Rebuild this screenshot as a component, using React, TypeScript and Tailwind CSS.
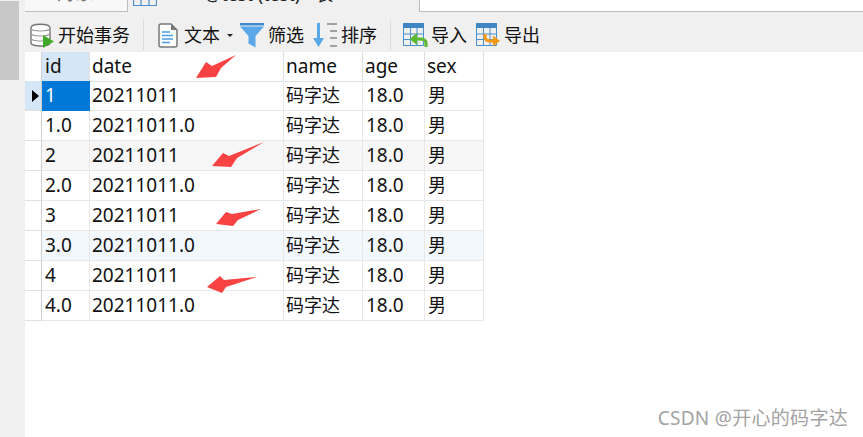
const rows = [
  { id: '1', date: '20211011', bg: 'bg-white' },
  { id: '1.0', date: '20211011.0', bg: 'bg-white' },
  { id: '2', date: '20211011', bg: 'bg-[#f7f7f7]' },
  { id: '2.0', date: '20211011.0', bg: 'bg-white' },
  { id: '3', date: '20211011', bg: 'bg-white' },
  { id: '3.0', date: '20211011.0', bg: 'bg-[#f3f8fd]' },
  { id: '4', date: '20211011', bg: 'bg-white' },
  { id: '4.0', date: '20211011.0', bg: 'bg-white' },
];

const font = "font-['Noto_Sans','Noto_Sans_CJK_SC',sans-serif]";
const cols = 'grid grid-cols-[17px_48px_194px_79px_62px_59px]';
const cell = 'border-r border-b border-[#e8e8e8] pl-[2px] text-[19px] leading-[29px] text-[#111] whitespace-nowrap';
const cjk = 'border-r border-b border-[#e8e8e8] pl-[2px] text-[18px] leading-[29px] text-[#111] whitespace-nowrap';
const wide = 'border-r border-b border-[#e8e8e8] pl-[3px] text-[19px] leading-[29px] text-[#111] whitespace-nowrap';
const wideCjk = 'border-r border-b border-[#e8e8e8] pl-[3px] text-[18px] leading-[29px] text-[#111] whitespace-nowrap';

const DbIcon = () => (
  <svg width="24" height="25" viewBox="0 0 24 25" fill="none">
    <path d="M1 5c0-5 19-5 19 0v15c0 4-19 4-19 0z" fill="#fff" stroke="#777" strokeWidth="1.4" />
    <path d="M1 5c0 4 19 4 19 0M1 10c0 4 19 4 19 0M1 15c0 4 19 4 19 0" stroke="#999" strokeWidth="1.2" />
    <path d="M13 12l11 6.500-11 6.500z" fill="#3fa92c" />
  </svg>
);

const DocIcon = () => (
  <svg width="20" height="25" viewBox="0 0 20 25" fill="none">
    <path d="M1 3c0-1 1-2 2-2h10l6 6v15c0 1-1 2-2 2H3c-1 0-2-1-2-2z" fill="#fff" stroke="#777" strokeWidth="1.5" />
    <path d="M13 1l6 6h-6z" fill="#777" />
    <path d="M4 9h8M4 12.500h11M4 16h11M4 19.500h8" stroke="#4a9fe4" strokeWidth="1.4" />
  </svg>
);

const FunnelIcon = () => (
  <svg width="24" height="25" viewBox="0 0 24 25">
    <path d="M0 0h24v2.500H0z" fill="#3d8bd0" />
    <path d="M0 3.500h24l-8.500 9.500v11.500l-7-4V13z" fill="#5aa8e8" />
  </svg>
);

const SortIcon = () => (
  <svg width="27" height="25" viewBox="0 0 27 25" fill="none">
    <path d="M5.500 0v18" stroke="#5aa8e8" strokeWidth="3" />
    <path d="M0 15h11l-5.500 9z" fill="#5aa8e8" />
    <path d="M14 1h10M17 8h7M17 15h7M17 23h7" stroke="#888" strokeWidth="1.3" />
  </svg>
);

const TableIcon = ({ out }: { out?: boolean }) => (
  <svg width="25" height="25" viewBox="0 0 25 25" fill="none">
    <path d="M0 0h21v5H0z" fill="#3f86c4" />
    <path d="M.5 5v17.500h20V5M7.500 5v17.500M14 5v17.500M.5 11h20M.5 16.500h20" stroke="#4a90cf" />
    {out ? (
      <>
        <path d="M9 11v3c0 3 3 4 6 4h4" stroke="#f59a16" strokeWidth="3.2" />
        <path d="M17 12.500l7 5.500-7 5.500z" fill="#f59a16" />
      </>
    ) : (
      <>
        <path d="M23 24v-4c0-3-3-4-6-4h-5" stroke="#5cb82e" strokeWidth="3.2" />
        <path d="M14 10l-7.500 6 7.500 6z" fill="#5cb82e" />
      </>
    )}
  </svg>
);

const Sep = () => <div className="h-[30px] w-px bg-[#dcdcdc]" />;

export default function App() {
  return (
    <div className={`relative flex h-[437px] w-[863px] overflow-hidden bg-white ${font}`}>
      <aside className="w-[25px] shrink-0 bg-[#f0f0f0]">
        <div className="mt-px h-[79px] w-[19px] bg-[#c8c8c8]" />
      </aside>

      <main className="min-w-0 flex-1">
        {/* tab strip, cut off by the top of the screenshot */}
        <div className="flex h-[12px] overflow-hidden">
          <div className="w-[103px] shrink-0 overflow-hidden border-r border-b border-[#bdbdbd] bg-[#f8f8f8] pl-[32px]">
            <div className="-mt-[19px] text-[18px] leading-[24px] text-[#777]">对象</div>
          </div>
          <div className="flex w-[291px] shrink-0 overflow-hidden bg-[#f0f0f0] pl-[5px]">
            <svg width="24" height="6" viewBox="0 0 24 6" fill="none" className="shrink-0">
              <path d="M.5 0v5.500h23V0M8 0v5.500M16 0v5.500" stroke="#4a90cf" strokeWidth="1.2" />
            </svg>
            <div className="-mt-[18px] ml-[48px] text-[18px] leading-[24px] whitespace-nowrap text-[#222]">
              @test (test) - 表
            </div>
          </div>
          <div className="flex-1 border-b border-l border-[#bdbdbd] bg-white" />
        </div>

        <div className="flex h-[40px] items-center bg-[#f0f0f0] pt-[6px] text-[18px] text-[#111]">
          <div className="ml-[5px] flex items-center gap-[4px]">
            <DbIcon />
            <span>开始事务</span>
          </div>
          <div className="mr-[14px] ml-[13px]"><Sep /></div>
          <DocIcon />
          <span className="ml-[6px]">文本</span>
          <span className="mt-[1px] mr-[7px] ml-[7px] h-0 w-0 border-x-[3px] border-t-[3px] border-x-transparent border-t-[#222]" />
          <FunnelIcon />
          <span className="ml-[4px]">筛选</span>
          <div className="ml-[9px]"><SortIcon /></div>
          <span className="ml-[1px]">排序</span>
          <div className="mr-[12px] ml-[13px]"><Sep /></div>
          <TableIcon />
          <span className="ml-[3px]">导入</span>
          <div className="ml-[9px]"><TableIcon out /></div>
          <span className="ml-[3px]">导出</span>
        </div>

        <div className="w-[459px]">
          <div className={`${cols} h-[29px]`}>
            <div className="border-r border-b border-r-[#d0d0d0] border-b-[#e0e0e0] bg-white" />
            <div className="border-r border-b border-r-[#e0e0e0] border-b-[#e0e0e0] bg-[#d5e7f7] pl-[3px] text-[19px] leading-[29px] text-[#111]">id</div>
            {['date', 'name', 'age', 'sex'].map((h) => (
              <div key={h} className="border-r border-b border-[#e0e0e0] pl-[2px] text-[19px] leading-[29px] text-[#111]">{h}</div>
            ))}
          </div>
          {rows.map((r, i) => (
            <div key={r.id} className={`${cols} h-[30px] ${r.bg}`}>
              <div className={`flex items-center justify-end border-r border-b border-r-[#d0d0d0] border-b-[#e0e0e0] pr-[2px] ${i === 0 ? 'bg-[#d5e7f7]' : 'bg-white'}`}>
                {i === 0 && <span className="h-0 w-0 border-y-[6px] border-l-[7px] border-y-transparent border-l-black" />}
              </div>
              <div className={i === 0 ? 'bg-[#0078d7] pl-[3px] text-[19px] leading-[29px] text-white' : wide}>{r.id}</div>
              <div className={cell}>{r.date}</div>
              <div className={cjk}>码字达</div>
              <div className={wide}>18.0</div>
              <div className={wideCjk}>男</div>
            </div>
          ))}
        </div>
      </main>

      {/* red annotation arrows drawn over the table */}
      <svg width="863" height="437" viewBox="0 0 863 437" className="pointer-events-none absolute top-0 left-0">
        <g fill="#f94343">
          <path d="M196 78 206 62 212 66 236 55 221 68 216 77z" />
          <path d="M212 166 223 153 229 156 264 142 237 158 231 167z" />
          <path d="M216 224 226 212 232 214 261 209 238 220 233 226z" />
          <path d="M207 287 220 276 224 280 257 277 226 287 222 293z" />
        </g>
      </svg>

      <div className="absolute top-[406px] right-[15px] text-[19px] leading-[24px] tracking-[0.3px] text-[#a3a3a3]">CSDN @开心的码字达</div>
    </div>
  );
}
